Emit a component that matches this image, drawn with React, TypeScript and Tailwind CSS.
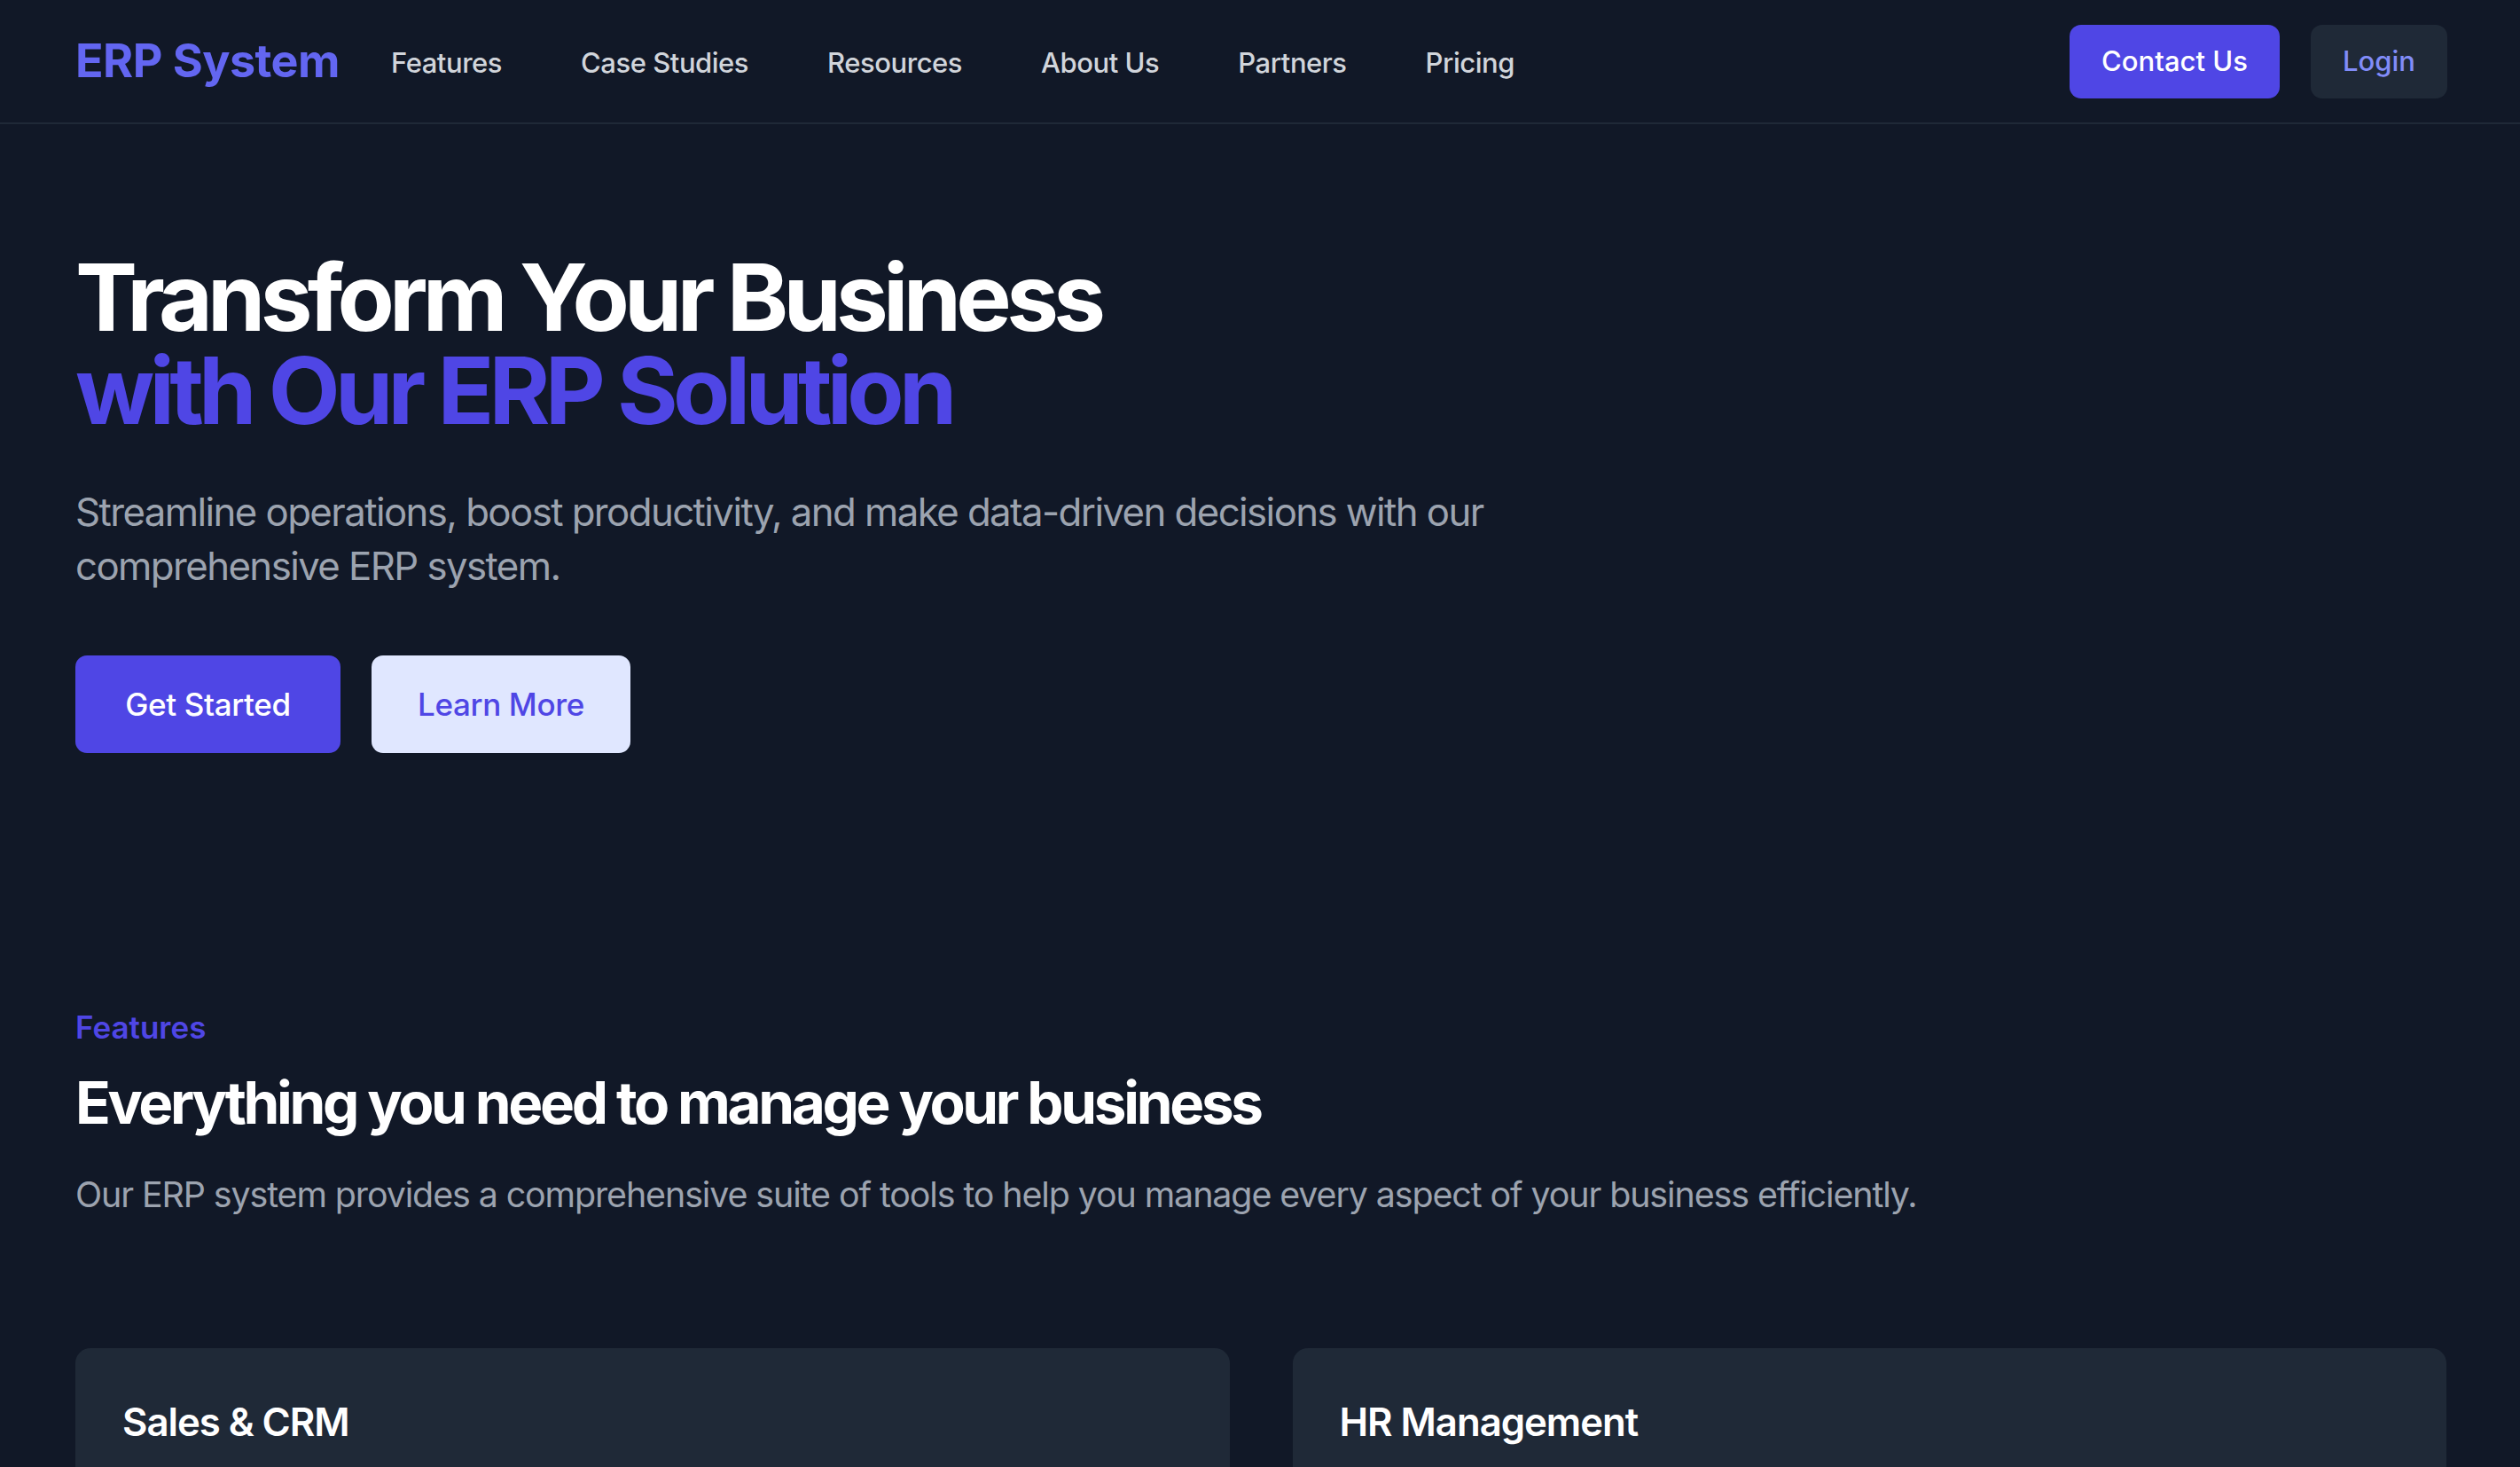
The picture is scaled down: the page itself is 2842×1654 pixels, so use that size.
const NAV_LINKS = ['Features', 'Case Studies', 'Resources', 'About Us', 'Partners', 'Pricing'];

const FEATURES = [
  {
    title: 'Sales & CRM',
    text: 'Manage leads, track opportunities and keep every customer relationship in one place.',
  },
  {
    title: 'HR Management',
    text: 'Handle hiring, payroll, attendance and employee records from a single dashboard.',
  },
];

function Header() {
  return (
    <header className="border-b-2 border-[#1f2937]">
      <div className="flex h-[138px] items-center justify-between pl-[85px] pr-[82px]">
        <div className="flex items-center">
          <a href="#" className="text-[52px] font-bold leading-none tracking-[-0.01em] text-[#6366f1]">
            ERP System
          </a>
          <nav className="ml-[58px] mt-[4px] flex items-center gap-[89px]">
            {NAV_LINKS.map((link) => (
              <a key={link} href="#" className="text-[31px] font-medium tracking-[-0.015em] text-[#d1d5db]">
                {link}
              </a>
            ))}
          </nav>
        </div>
        <div className="flex items-center gap-[35px]">
          <button className="flex h-[83px] w-[237px] items-center justify-center rounded-[13px] bg-[#4f46e5] text-[31px] font-medium text-white">
            Contact Us
          </button>
          <button className="flex h-[83px] w-[154px] items-center justify-center rounded-[13px] bg-[#1f2937] text-[31px] font-medium text-[#818cf8]">
            Login
          </button>
        </div>
      </div>
    </header>
  );
}

function Hero() {
  return (
    <section className="pl-[85px] pr-[82px] pt-[142px] pb-[140px]">
      <h1 className="text-[105px] font-bold leading-none tracking-[-0.055em] text-white">
        <span className="block">Transform Your Business</span>
        <span className="block text-[#4f46e5]">with Our ERP Solution</span>
      </h1>
      <p className="mt-[55px] max-w-[1680px] text-[43.75px] leading-[61px] tracking-[-0.036em] text-[#9ca3af]">
        Streamline operations, boost productivity, and make data-driven decisions with our comprehensive ERP system.
      </p>
      <div className="mt-[70px] flex gap-[35px]">
        <button className="flex h-[110px] w-[299px] items-center justify-center rounded-[13px] bg-[#4f46e5] text-[35px] font-medium tracking-[-0.01em] text-white">
          Get Started
        </button>
        <button className="flex h-[110px] w-[292px] items-center justify-center rounded-[13px] bg-[#e0e7ff] text-[35px] font-medium tracking-[-0.01em] text-[#4f46e5]">
          Learn More
        </button>
      </div>
    </section>
  );
}

function Features() {
  return (
    <section className="pl-[85px] pr-[83px] pt-[143px] pb-[140px]">
      <h2 className="text-[35px] font-semibold leading-[52px] text-[#4f46e5]">Features</h2>
      <p className="mt-[20px] text-[65.6px] font-bold leading-[79px] tracking-[-0.051em] text-white">
        Everything you need to manage your business
      </p>
      <p className="mt-[34px] text-[39.4px] leading-[61px] tracking-[-0.028em] text-[#9ca3af]">
        Our ERP system provides a comprehensive suite of tools to help you manage every aspect of your business efficiently.
      </p>
      <div className="mt-[142px] grid grid-cols-2 gap-[71px]">
        {FEATURES.map((item) => (
          <div key={item.title} className="rounded-[17px] bg-[#1f2937] p-[53px]">
            <h3 className="text-[43.75px] font-semibold leading-[61px] tracking-[-0.024em] text-white">{item.title}</h3>
            <p className="mt-[35px] text-[35px] leading-[52px] text-[#9ca3af]">{item.text}</p>
          </div>
        ))}
      </div>
    </section>
  );
}

export default function App() {
  return (
    <div className="min-h-screen bg-[#111827] font-['Inter','Liberation_Sans',sans-serif]">
      <Header />
      <Hero />
      <Features />
    </div>
  );
}
